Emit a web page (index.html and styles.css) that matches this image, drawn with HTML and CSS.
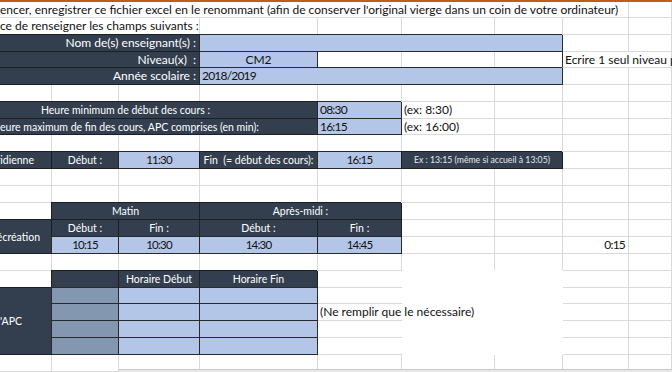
FILE: index.html
```html
<!DOCTYPE html>
<html lang="fr">
<head>
<meta charset="utf-8">
<title>Paramètres</title>
<link rel="stylesheet" href="styles.css">
</head>
<body>
<div class="band"></div>
<div class="sheet">
  <!-- R1 -->
  <div class="c s8 l">encer, enregistrer ce fichier excel en le renommant (afin de conserver l'original vierge dans un coin de votre ordinateur)</div><div class="c"></div>
  <!-- R2 -->
  <div class="c s3 l">ce de renseigner les champs suivants :</div><div class="c"></div><div class="c"></div><div class="c"></div><div class="c"></div><div class="c"></div><div class="c"></div>
  <!-- R3 -->
  <div class="c d s3 r">Nom de(s) enseignant(s) :</div><div class="c b s4"></div><div class="c"></div><div class="c"></div>
  <!-- R4 -->
  <div class="c d s3 r">Niveau(x)  :</div><div class="c b m">CM2</div><div class="c"></div><div class="c"></div><div class="c rb"></div><div class="c s2 l pl">Ecrire 1 seul niveau par feuille</div>
  <!-- R5 -->
  <div class="c d s3 r">Année scolaire :</div><div class="c b s4 l pl num">2018/2019</div><div class="c"></div><div class="c"></div>
  <!-- R6 -->
  <div class="c"></div><div class="c"></div><div class="c"></div><div class="c"></div><div class="c"></div><div class="c"></div><div class="c"></div><div class="c"></div><div class="c"></div>
  <!-- R7 -->
  <div class="c d s4 m off f10">Heure minimum de début des cours :</div><div class="c b l pl num">08:30</div><div class="c l pl">(ex: 8:30)</div><div class="c"></div><div class="c"></div><div class="c"></div>
  <!-- R8 -->
  <div class="c d s4 m off f10">Heure maximum de fin des cours, APC comprises (en min):</div><div class="c b l pl num">16:15</div><div class="c l pl">(ex: 16:00)</div><div class="c"></div><div class="c"></div><div class="c"></div>
  <!-- R9 -->
  <div class="c"></div><div class="c"></div><div class="c"></div><div class="c"></div><div class="c"></div><div class="c"></div><div class="c"></div><div class="c"></div><div class="c"></div>
  <!-- R10 -->
  <div class="c d r pr17 f10">Pause méridienne</div><div class="c d m f10">Début :</div><div class="c b m num sm">11:30</div><div class="c d m f10">Fin  (= début des cours):</div><div class="c b m num sm">16:15</div><div class="c d s2 m small">Ex : 13:15 (même si accueil à 13:05)</div><div class="c"></div><div class="c"></div>
  <!-- R11 -->
  <div class="c"></div><div class="c"></div><div class="c"></div><div class="c"></div><div class="c"></div><div class="c"></div><div class="c"></div><div class="c"></div><div class="c"></div>
  <!-- R12 -->
  <div class="c"></div><div class="c"></div><div class="c"></div><div class="c"></div><div class="c"></div><div class="c"></div><div class="c"></div><div class="c"></div><div class="c"></div>
  <!-- R13 -->
  <div class="c"></div><div class="c d s2 m f10">Matin</div><div class="c d s2 m f10">Après-midi :</div><div class="c"></div><div class="c"></div><div class="c"></div><div class="c"></div>
  <!-- R14 -->
  <div class="c d v2 r pr11 f10">Récréation</div><div class="c d m f10">Début :</div><div class="c d m f10">Fin :</div><div class="c d m f10">Début :</div><div class="c d m f10">Fin :</div><div class="c"></div><div class="c"></div><div class="c"></div><div class="c"></div>
  <!-- R15 -->
  <div class="c b m num sm">10:15</div><div class="c b m num sm">10:30</div><div class="c b m num sm">14:30</div><div class="c b m num sm">14:45</div><div class="c"></div><div class="c"></div><div class="c r pr3 num">0:15</div><div class="c"></div>
  <!-- R16 -->
  <div class="c"></div><div class="c"></div><div class="c"></div><div class="c"></div><div class="c"></div><div class="c"></div><div class="c"></div><div class="c"></div><div class="c"></div>
  <!-- R17 -->
  <div class="c"></div><div class="c d"></div><div class="c d m f10">Horaire Début</div><div class="c d m f10">Horaire Fin</div><div class="c nr"></div><div class="wb"></div><div class="c"></div><div class="c"></div>
  <!-- R18 -->
  <div class="c d v4 l f10">'APC</div><div class="c g"></div><div class="c b"></div><div class="c b"></div><div class="c nr"></div><div class="c"></div><div class="c"></div>
  <!-- R19 -->
  <div class="c g"></div><div class="c b"></div><div class="c b"></div><div class="c nr l pl">(Ne remplir que le nécessaire)</div><div class="c"></div><div class="c"></div>
  <!-- R20 -->
  <div class="c g"></div><div class="c b"></div><div class="c b"></div><div class="c nr"></div><div class="c"></div><div class="c"></div>
  <!-- R21 -->
  <div class="c g"></div><div class="c b"></div><div class="c b"></div><div class="c nr"></div><div class="c"></div><div class="c"></div>
  <!-- R22 -->
  <div class="c"></div><div class="c"></div><div class="c"></div><div class="c"></div><div class="c"></div><div class="c"></div><div class="c"></div><div class="c"></div><div class="c"></div>
</div>
<div class="hscroll"></div>
</body>
</html>
```
FILE: styles.css
```css
html, body {
  margin: 0;
  padding: 0;
}
body {
  width: 672px;
  height: 372px;
  overflow: hidden;
  position: relative;
  background: #ffffff;
  font-family: Lato, "Liberation Sans", sans-serif;
  font-size: 12px;
  color: #111111;
}
.band {
  height: 2px;
  background: #c45a1c;
}
.sheet {
  display: grid;
  grid-template-columns: 52px 67px 81px 118px 84px 93px 68px 66px 43px;
  grid-template-rows: 16px 17px 17px 16px 17px 17px 17px 16px 17px 17px 17px 17px 17px 17px 17px 17px 17px 16px 17px 17px 17px 17px;
}
.c {
  box-sizing: border-box;
  border-right: 1px solid #dadada;
  border-bottom: 1px solid #dadada;
  display: flex;
  align-items: center;
  white-space: pre;
  min-width: 0;
  line-height: 14px;
}
.s2 { grid-column: span 2; }
.s3 { grid-column: span 3; }
.s4 { grid-column: span 4; }
.s8 { grid-column: span 8; }
.v2 { grid-row: span 2; }
.v4 { grid-row: span 4; }
.l { justify-content: flex-start; }
.r { justify-content: flex-end; padding-right: 3px; }
.m { justify-content: center; }
.pl { padding-left: 2px; }
.pr3 { padding-right: 3px; }
.pr11 { padding-right: 11px; }
.pr17 { padding-right: 17px; }
.off { padding-right: 66px; }
.f10 { font-size: 10.5px; }
.num { letter-spacing: -0.8px; }
.sm { font-size: 11.5px; }
.d {
  background: #333f4f;
  color: #ffffff;
  border-color: #1c1f24;
  box-shadow: -1px -1px 0 #1c1f24;
}
.b {
  background: #b4c6e7;
  border-color: #2a2a2a;
  box-shadow: -1px -1px 0 #2a2a2a;
}
.g {
  background: #8497b0;
  border-color: #2a2a2a;
  box-shadow: -1px -1px 0 #2a2a2a;
}
.rb { border-right-color: #2a2a2a; }
.nr { border-right: none; }
.wb {
  grid-column: span 2;
  grid-row: span 5;
  background: #ffffff;
  box-shadow: 0 -1px 0 #ffffff;
}
.small {
  font-size: 8.7px;
  color: #e4e8ee;
}
.hscroll {
  position: absolute;
  left: 119px;
  right: 0;
  bottom: 0;
  height: 2px;
  background: #e8e8e8;
  border-top: 1px solid #c8c8c8;
}
```
